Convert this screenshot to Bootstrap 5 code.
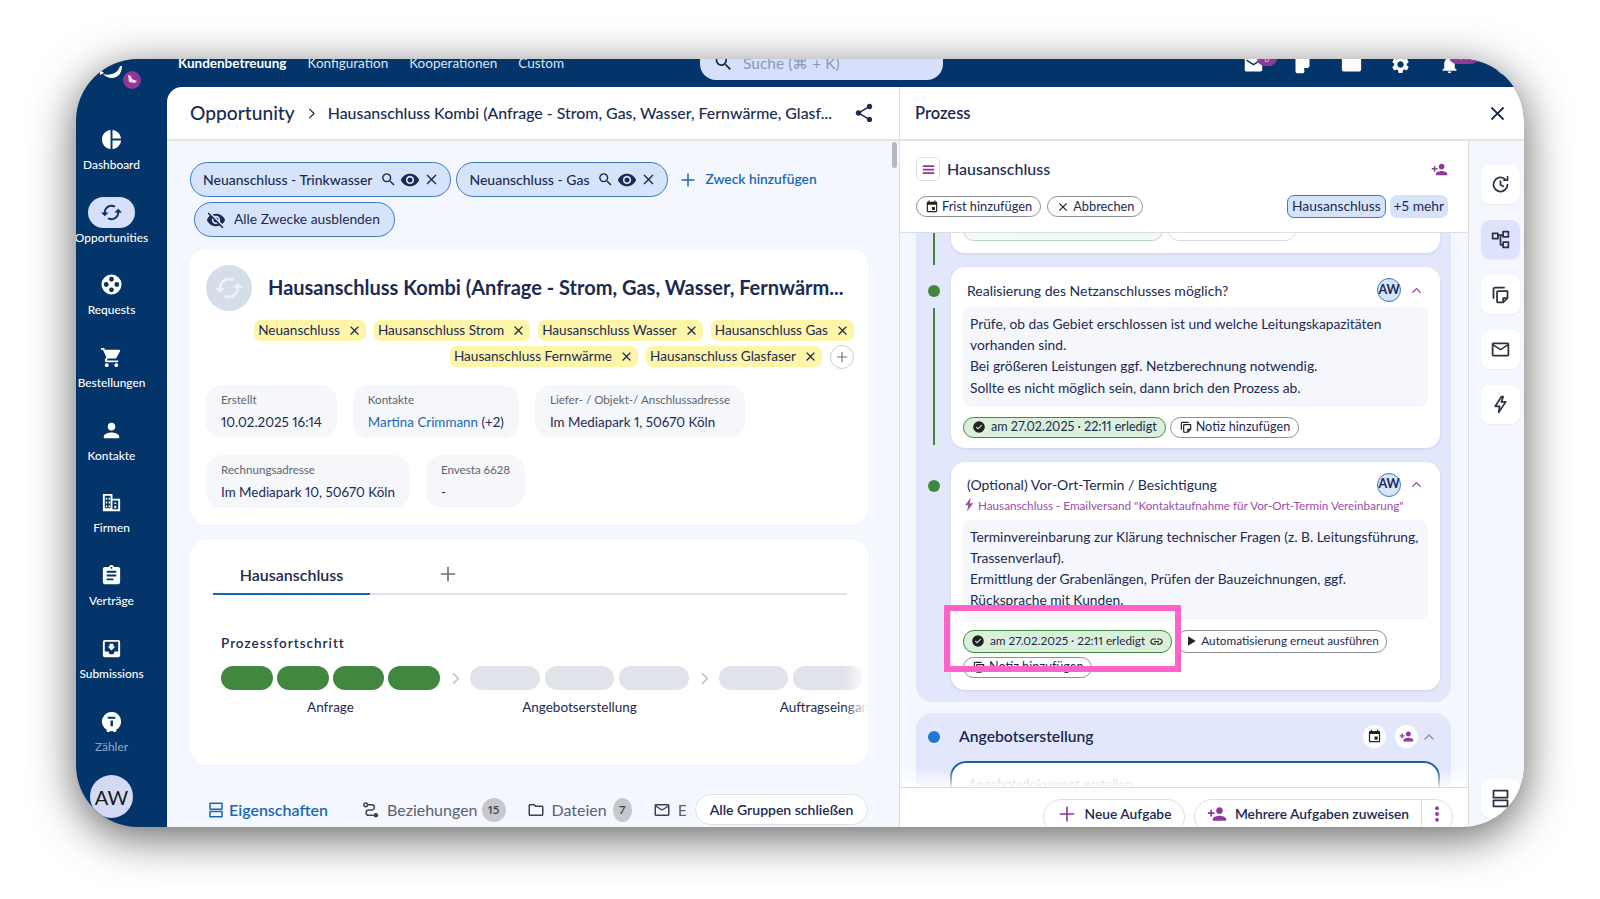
<!DOCTYPE html>
<html lang="de">

<head>
    <meta charset="UTF-8" />
    <meta name="viewport" content="width=device-width, initial-scale=1.0" />
    <title>Opportunity</title>
    <link href="https://cdn.jsdelivr.net/npm/bootstrap@5.3.2/dist/css/bootstrap.min.css" rel="stylesheet" />
    <style>
        html, body { height: 899px; overflow: hidden; }
        body { background: #fff; font-family: "Lato", "Liberation Sans", sans-serif; color: #1c2a52; font-size: 14px; font-variant-numeric: proportional-nums; }
        .ic { width: 1em; height: 1em; flex: none; fill: currentColor; display: block; }
        .ics { fill: none; stroke: currentColor; stroke-width: 2; stroke-linecap: round; stroke-linejoin: round; }

        .appwin { position: absolute; left: 76px; top: 59px; width: 1448px; height: 768px; border-radius: 62px; overflow: hidden; background: #03346a; box-shadow: 0 10px 46px rgba(0, 0, 0, .62); }

        /* sidebar */
        .side { width: 91px; flex: none; color: #fff; padding-right: 20px; }
        .logo-box { height: 65px; }
        .side-item { height: 72.7px; font-size: 11.9px; font-weight: 500; white-space: nowrap; }
        .side-ico { width: 47px; height: 31px; border-radius: 16px; font-size: 23px; }
        .side-item.active .side-ico { background: #d6e0fb; color: #03346a; }
        .side-lbl { line-height: 14px; margin-top: 3px; }
        .side-item.dim .side-lbl { color: #8ba3c4; }
        .side-av { width: 43px; height: 43px; border-radius: 50%; background: #d2daf6; color: #1a1a1a; font-size: 20px; margin-top: -3px; flex: none; }

        /* top bar */
        .topbar { height: 28px; flex: none; color: #fff; padding-left: 11px; }
        .topnav { font-size: 13.5px; margin-top: -4px; margin-right: 21px; line-height: 16px; color: #dbe4f3; }
        .topnav.on { font-weight: 700; color: #fff; }
        .searchbox { width: 243px; height: 41px; margin: -20px 0 0 115px; background: #d6e0fb; border-radius: 0 0 16px 16px; padding: 13px 0 0 13px; color: #8b98b6; font-size: 15.5px; }
        .searchbox .ic { color: #1c2a52; font-size: 21px; margin-right: 9px; }
        .topicons { margin-left: auto; gap: 28px; margin-top: -5px; font-size: 21px; padding-right: 8px; }
        .topbadge { position: absolute; top: -4px; left: 14px; height: 16px; min-width: 20px; border-radius: 8px; background: #8e3a96; font-size: 9px; line-height: 18px; text-align: center; color: #d9b8dd; }
        .topbadge.wide { min-width: 30px; left: 10px; top: -6px; }
        .topround { width: 20px; height: 20px; border-radius: 50%; border: 2px solid #fff; margin-left: 8px; margin-top: 1px; }

        .body-wrap { min-height: 0; background: #fff; border-radius: 15px 0 0 0; overflow: hidden; }

        /* header strip */
        .headline { height: 54px; flex: none; border-bottom: 2px solid #e2e4e8; }
        .head-left { width: 733px; flex: none; padding: 0 24px 0 23px; border-right: 1px solid #dcdee3; }
        .h-crumb { font-size: 19.2px; font-weight: 500; white-space: nowrap; }
        .h-sep { font-size: 15px; margin: 0 9px 0 9px; }
        .h-title { font-size: 15.9px; font-weight: 500; width: 510px; white-space: nowrap; overflow: hidden; }
        .h-share { font-size: 22px; margin-left: 21px; }
        .head-right { padding: 0 15px; font-size: 16.5px; font-weight: 600; }
        .head-right .ic { font-size: 23px; margin-left: auto; }

        /* left pane */
        .pane-left { width: 733px; flex: none; background: #f5f7ff; border-right: 1px solid #dcdee3; padding: 21px 31px 0 23px; }
        .scroll-thumb { position: absolute; right: 2px; top: 1px; width: 5px; height: 26px; border-radius: 3px; background: #b4b8c0; }
        .purpose { height: 35px; background: #d6e4fb; border: 1.5px solid #3a79bf; border-radius: 18px; padding: 0 10px 0 12px; font-size: 14px; font-weight: 500; }
        .purpose .ic { font-size: 17px; }
        .purpose .ic-b { font-size: 20px; margin: 0 3px; }
        .purpose.hide-all { margin-left: 4px; padding: 0 14px 0 11px; font-weight: 400; font-size: 13.8px; }
        .purpose.hide-all .ic { font-size: 20px; margin-right: 8px; }
        .add-purpose { color: #1b67b7; font-size: 13.8px; font-weight: 600; margin-left: 6px; }
        .add-purpose .ic { font-size: 18px; margin-right: 8px; }
        .box-white { background: #fff; border-radius: 16px; }
        .box-top { height: 275px; margin-top: 12px; padding: 16px 14px 0 16px; }
        .opp-av { width: 46px; height: 46px; border-radius: 50%; background: #d3deea; color: #eef3f8; font-size: 30px; flex: none; }
        .opp-title { font-size: 20px; font-weight: 700; margin-left: 16px; white-space: nowrap; margin-top: -2px; }
        .tagrow { margin-top: 9px; gap: 5px 8px; }
        .ytag { height: 21px; background: #fdf6a9; border-radius: 7px; padding: 0 4px; font-size: 13.6px; line-height: 21px; white-space: nowrap; }
        .ytag .ic { font-size: 15px; margin-left: 7px; }
        .addtag { width: 24px; height: 24px; border-radius: 50%; border: 1px solid #c9ccd3; color: #6d7280; font-size: 14px; margin: -2px 0; }
        .inforow { gap: 16px; margin-top: 18px; }
        .inforow.second { margin-top: 17px; }
        .infobox { height: 53px; background: #f5f7fb; border-radius: 16px; padding: 7px 15px 0; white-space: nowrap; }
        .infobox small { display: block; font-size: 11.6px; line-height: 15px; color: #5d6470; }
        .infobox div { font-size: 13.4px; line-height: 19px; margin-top: 6px; }
        .infobox a { color: #1b67b7; text-decoration: none; }
        .box-proc { height: 224px; margin-top: 16px; padding-top: 1px; }
        .tabline { margin: 16px 21px 0 23px; height: 38px; border-bottom: 2px solid #dfe2e8; }
        .tabon { width: 157px; height: 38px; border-bottom: 2px solid #1b67b7; font-size: 16px; font-weight: 600; text-align: center; line-height: 36px; }
        .tabplus { font-size: 20px; color: #6d7280; margin-left: 68px; margin-top: 7px; }
        .pf-title { font-size: 13.5px; font-weight: 600; letter-spacing: 1px; margin: 39px 0 0 31px; line-height: 18px; }
        .pf-wrap { margin: 14px 0 0 31px; overflow: hidden; }
        .pf-fade { position: absolute; right: 0; top: 0; bottom: 0; width: 24px; background: linear-gradient(to right, rgba(255, 255, 255, 0), #fff); }
        .pf-grp { flex: none; width: 219px; }
        .pf-grp.wide { width: 218px; }
        .seg { flex: 1 1 0; height: 24px; border-radius: 12px; background: #e0e3ea; }
        .seg.done { background: #42873f; }
        .pf-lbl { text-align: center; font-size: 13.5px; margin-top: 8px; line-height: 18px; white-space: nowrap; }
        .pf-arrow { flex: none; width: 30px; height: 24px; color: #b9bcc4; font-size: 17px; }
        .subtabs { height: 31px; margin-top: 30px; }
        .subtab-clip { width: 496px; padding-left: 17px; overflow: hidden; white-space: nowrap; font-size: 16px; color: #5a6070; }
        .subtab { flex: none; margin-right: 21px; }
        .subtab .ic { font-size: 18px; margin-right: 7px; color: #3c4250; }
        .subtab.on { color: #1b67b7; font-weight: 600; margin-right: 34px; }
        .subtab.on .ic { color: #1b67b7; margin-right: 4px; }
        .cnt { width: 24px; height: 24px; border-radius: 50%; background: #c5c8cf; color: #444; font-size: 12px; margin-left: 4px; font-weight: 600; }
        .cnt.sm { width: 19px; margin-left: 6px; }
        .closeall { height: 31px; width: 173px; margin-left: auto; background: #fff; border: 1px solid #dfe2e8; border-radius: 16px; font-size: 14px; font-weight: 600; padding: 0; line-height: 28px; color: #1c2a52; flex: none; }

        /* right pane */
        .pane-right { min-width: 0; }
        .proc-col { width: 569px; flex: none; border-right: 1px solid #dcdee3; }
        .proc-head { height: 92px; flex: none; border-bottom: 1px solid #dcdee3; padding: 16px 20px 0 16px; }
        .menu-sq { width: 24px; height: 24px; border: 1px solid #dcdee3; border-radius: 5px; color: #8e3a96; font-size: 17px; }
        .ph-title { font-size: 16px; font-weight: 500; margin-left: 7px; }
        .ph-add { margin-left: auto; font-size: 17px; color: #8e3a96; }
        .ph-row { margin-top: 14px; gap: 0; }
        .ochip { height: 21px; border: 1px solid #8b8f97; border-radius: 11px; padding: 0 8px; font-size: 12.8px; white-space: nowrap; background: #fff; }
        .ochip .ic { font-size: 14px; margin-right: 3px; color: #222; }
        .ochip.next-to { margin-left: 6px; }
        .task .ochip { font-size: 12.6px; }
        .task .ochip.tight { font-size: 11.8px; padding: 0 7px; }
        .ochip.green { background: #daf0da; border-color: #3d8b40; color: #1c2a52; padding: 0 8px; }
        .ochip.green .ic { font-size: 14px; margin-right: 5px; }
        .ochip.green .ic.tail { margin: 0 0 0 4px; font-size: 15px; }
        .bchip { height: 23px; background: #d6e4fb; border-radius: 7px; padding: 0 4px; font-size: 13.8px; white-space: nowrap; margin-left: 4px; }
        .bchip.bordered { border: 1.5px solid #3a79bf; margin-left: auto; }

        .proc-scroll { min-height: 0; background: #f5f7ff; overflow: hidden; padding: 0 17px 0 16px; }
        .stage-panel { background: #e3e7fb; border-radius: 16px; padding: 0 11px 12px 0; margin-top: -30px; }
        .step { padding-bottom: 14px; }
        .step.first { padding-bottom: 2px; }
        .step:last-child { padding-bottom: 0; }
        .gut { width: 35px; flex: none; }
        .gut-dot { width: 12px; height: 12px; border-radius: 50%; background: #42873f; margin-top: 18px; }
        .gut-line { width: 2px; flex: 1 1 0; background: #42873f; margin-top: 11px; margin-bottom: 3px; }
        .gut-line.up { flex: none; height: 32px; margin-top: 30px; margin-bottom: 0; }
        .task { background: #fff; border-radius: 14px; box-shadow: 0 1px 3px rgba(40, 50, 110, .12); padding: 11px 12px 10px; min-width: 0; }
        .task.tall { padding-bottom: 12px; }
        .task.old { height: 50px; padding: 17px 12px 0; overflow: hidden; margin-bottom: 12px; gap: 5px; }
        .faint { opacity: .35; }
        .faint.w1 { width: 200px; }
        .faint.w2 { width: 128px; }
        .task-head { height: 24px; margin-bottom: 5px; padding-left: 4px; font-size: 14px; }
        .av-sm { width: 24px; height: 24px; border-radius: 50%; background: #d6e4fb; border: 1.5px solid #3a79bf; font-size: 12.5px; font-weight: 700; margin-left: auto; }
        .chev { color: #8e3a96; font-size: 15px; margin: 0 4px 0 8px; }
        .task-auto { color: #a04bab; font-size: 11.7px; line-height: 16px; margin: -5px 0 7px -1px; white-space: nowrap; }
        .task-auto .ic { font-size: 15px; margin-right: 1px; }
        .task-txt { background: #f5f7fc; border-radius: 8px; padding: 6px 7px 9px; font-size: 13.8px; line-height: 21.2px; }
        .chips { margin-top: 10px; gap: 4px 4px; }
        .chips .taller { height: 23px; }
        .pinkmark { position: absolute; left: -7px; top: 143px; width: 237px; height: 67px; border: 6px solid #ff62c8; pointer-events: none; }
        .stage-next { margin-top: 11px; border-radius: 16px 16px 0 0; padding: 0 11px 0 0; height: 100px; background: #e3e7fb; }
        .next-head { height: 48px; }
        .next-dot { width: 12px; height: 12px; border-radius: 50%; background: #2176d6; }
        .next-title { font-size: 15.7px; font-weight: 600; }
        .round-w { width: 23px; height: 23px; border-radius: 50%; background: #fff; font-size: 15px; margin-left: 8.500px; color: #222; }
        .round-w.p { color: #8e3a96; }
        .next-chev { color: #8a8e98; font-size: 16px; margin: 0 3px 0 3.500px; }
        .next-task { margin-left: 34px; height: 60px; background: #fff; border: 2px solid #17609f; border-radius: 16px 16px 0 0; padding: 12px 16px; font-size: 13px; color: #aeb4c4; }
        .proc-fade { position: absolute; left: 0; right: 0; bottom: 0; height: 18px; background: linear-gradient(to bottom, rgba(255, 255, 255, 0), rgba(255, 255, 255, .9)); }
        .proc-foot { height: 40px; flex: none; border-top: 1px solid #dcdee3; padding: 11px 15px 0 0; overflow: hidden; gap: 9px; }
        .fbtn { height: 36px; background: #fff; border: 1px solid #dcdee3; border-radius: 18px; font-size: 13.8px; font-weight: 600; flex: none; padding: 0 0 6px; color: #1c2a52; }
        .fbtn .ic { color: #8e3a96; font-size: 20px; }
        .fbtn.one { width: 142px; }
        .fbtn.two { width: 259px; }
        .fsplit { border-left: 1px solid #dcdee3; width: 31px; height: 36px; margin-bottom: -6px; padding-bottom: 6px; color: #8e3a96; font-size: 20px; }

        .rail { background: #f5f7ff; padding: 24px 0 9px 12px; gap: 16px; }
        .railbtn { width: 39px; height: 39px; background: #fff; border-radius: 9px; font-size: 21px; color: #2a3340; box-shadow: 0 1px 2px rgba(0, 0, 0, .05); }
        .railbtn.on { background: #dce3fa; }
    </style>
</head>

<body>
    <!-- icon set -->
    <svg class="d-none" xmlns="http://www.w3.org/2000/svg">
        <symbol id="i-x" viewBox="0 0 24 24"><path d="M19 6.41 17.59 5 12 10.59 6.41 5 5 6.41 10.59 12 5 17.59 6.41 19 12 13.41 17.59 19 19 17.59 13.41 12z" /></symbol>
        <symbol id="i-search" viewBox="0 0 24 24"><path d="M15.5 14h-.79l-.28-.27A6.471 6.471 0 0 0 16 9.5 6.5 6.5 0 1 0 9.5 16c1.61 0 3.09-.59 4.23-1.57l.27.28v.79l5 4.99L20.49 19l-4.99-5zm-6 0C7.01 14 5 11.99 5 9.5S7.01 5 9.5 5 14 7.01 14 9.5 11.99 14 9.5 14z" /></symbol>
        <symbol id="i-eye" viewBox="0 0 24 24"><path d="M12 4.5C7 4.5 2.73 7.61 1 12c1.73 4.39 6 7.5 11 7.5s9.27-3.11 11-7.5c-1.73-4.39-6-7.5-11-7.5zM12 17c-2.76 0-5-2.24-5-5s2.24-5 5-5 5 2.24 5 5-2.24 5-5 5zm0-8c-1.66 0-3 1.34-3 3s1.34 3 3 3 3-1.34 3-3-1.34-3-3-3z" /></symbol>
        <symbol id="i-eyeoff" viewBox="0 0 24 24"><path d="M12 7c2.76 0 5 2.24 5 5 0 .65-.13 1.26-.36 1.83l2.92 2.92c1.51-1.26 2.7-2.89 3.43-4.75-1.73-4.39-6-7.5-11-7.5-1.4 0-2.74.25-3.98.7l2.16 2.16C10.74 7.13 11.35 7 12 7zM2 4.27l2.28 2.28.46.46A11.804 11.804 0 0 0 1 12c1.73 4.39 6 7.5 11 7.5 1.55 0 3.03-.3 4.38-.84l.42.42L19.73 22 21 20.73 3.27 3 2 4.27zM7.53 9.8l1.55 1.55c-.05.21-.08.43-.08.65 0 1.66 1.34 3 3 3 .22 0 .44-.03.65-.08l1.55 1.55c-.67.33-1.41.53-2.2.53-2.76 0-5-2.24-5-5 0-.79.2-1.53.53-2.2zm4.31-.78 3.15 3.15.02-.16c0-1.66-1.34-3-3-3l-.17.01z" /></symbol>
        <symbol id="i-sync" viewBox="0 0 24 24"><path d="M19 8l-4 4h3c0 3.31-2.69 6-6 6-1.01 0-1.97-.25-2.800-.7l-1.460 1.460C8.970 19.540 10.430 20 12 20c4.420 0 8-3.580 8-8h3l-4-4zM6 12c0-3.310 2.690-6 6-6 1.010 0 1.970.25 2.800.7l1.460-1.460C15.030 4.460 13.570 4 12 4c-4.420 0-8 3.580-8 8H1l4 4 4-4H6z" /></symbol>
        <symbol id="i-pie" viewBox="0 0 24 24"><path d="M11 2v20c-5.07-.5-9-4.79-9-10s3.93-9.5 9-10zm2.03 0v8.99H22c-.47-4.74-4.24-8.52-8.97-8.99zm0 11.01V22c4.74-.47 8.5-4.25 8.97-8.99h-8.97z" /></symbol>
        <symbol id="i-cart" viewBox="0 0 24 24"><path d="M7 18c-1.1 0-1.99.9-1.99 2S5.9 22 7 22s2-.9 2-2-.9-2-2-2zM1 2v2h2l3.6 7.59-1.35 2.45c-.16.28-.25.61-.25.96 0 1.1.9 2 2 2h12v-2H7.42c-.14 0-.25-.11-.25-.25l.03-.12.9-1.63h7.45c.75 0 1.41-.41 1.75-1.03l3.58-6.49c.08-.14.12-.31.12-.48 0-.55-.45-1-1-1H5.21l-.94-2H1zm16 16c-1.1 0-1.99.9-1.99 2s.89 2 1.99 2 2-.9 2-2-.9-2-2-2z" /></symbol>
        <symbol id="i-person" viewBox="0 0 24 24"><path d="M12 12c2.21 0 4-1.79 4-4s-1.79-4-4-4-4 1.79-4 4 1.79 4 4 4zm0 2c-2.67 0-8 1.34-8 4v2h16v-2c0-2.66-5.33-4-8-4z" /></symbol>
        <symbol id="i-padd" viewBox="0 0 24 24"><path d="M15 12c2.21 0 4-1.79 4-4s-1.79-4-4-4-4 1.79-4 4 1.79 4 4 4zm-9-2V7H4v3H1v2h3v3h2v-3h3v-2H6zm9 4c-2.67 0-8 1.34-8 4v2h16v-2c0-2.66-5.33-4-8-4z" /></symbol>
        <symbol id="i-clip" viewBox="0 0 24 24"><path d="M19 3h-4.18C14.4 1.84 13.3 1 12 1c-1.3 0-2.4.84-2.82 2H5c-1.1 0-2 .9-2 2v14c0 1.1.9 2 2 2h14c1.1 0 2-.9 2-2V5c0-1.1-.9-2-2-2zm-7 0c.55 0 1 .45 1 1s-.45 1-1 1-1-.45-1-1 .45-1 1-1zm2 14H7v-2h7v2zm3-4H7v-2h10v2zm0-4H7V7h10v2z" /></symbol>
        <symbol id="i-inbox" viewBox="0 0 24 24"><path fill-rule="evenodd" d="M5 3h14a2 2 0 0 1 2 2v14a2 2 0 0 1-2 2H5a2 2 0 0 1-2-2V5a2 2 0 0 1 2-2zm0 2v10h4a3 3 0 0 0 6 0h4V5H5zm5 2h4v3h2l-4 4-4-4h2V7z" /></symbol>
        <symbol id="i-build" viewBox="0 0 24 24"><path fill-rule="evenodd" d="M3 3h10v5h8v13H3V3zm2 2v13h6V5H5zm1 2h1.500v2H6zm3 0h1.500v2H9zm-3 4h1.500v2H6zm3 0h1.500v2H9zm-3 4h1.500v2H6zm3 0h1.500v2H9zm4-5v9h6v-9h-6zm2 2h2v1.500h-2zm0 3.500h2V18h-2z" /></symbol>
        <symbol id="i-help" viewBox="0 0 24 24"><path fill-rule="evenodd" d="M22 12a10 10 0 0 1-5 8.660V22a1 1 0 0 1-1 1h-1.500a1 1 0 0 1-1-1v-.05a10 10 0 0 1-3 0V22a1 1 0 0 1-1 1H8a1 1 0 0 1-1-1v-1.340A10 10 0 1 1 22 12zM8 7v2h8V7H8zm3 4v6h2.500v-6H11z" /></symbol>
        <symbol id="i-wheel" viewBox="0 0 24 24"><path fill-rule="evenodd" d="M12 1.500a10.500 10.500 0 1 1 0 21 10.500 10.500 0 0 1 0-21zM12 4a2.500 2.500 0 1 0 0 5 2.500 2.500 0 0 0 0-5zm0 11a2.500 2.500 0 1 0 0 5 2.500 2.500 0 0 0 0-5zM6.500 9.500a2.500 2.500 0 1 0 0 5 2.500 2.500 0 0 0 0-5zm11 0a2.500 2.500 0 1 0 0 5 2.500 2.500 0 0 0 0-5z" /></symbol>
        <symbol id="i-share" viewBox="0 0 24 24"><path d="M18 16.08c-.76 0-1.44.3-1.96.77L8.91 12.7c.05-.23.09-.46.09-.7s-.04-.47-.09-.7l7.05-4.11c.54.5 1.25.81 2.04.81 1.66 0 3-1.34 3-3s-1.34-3-3-3-3 1.34-3 3c0 .24.04.47.09.7L8.04 9.81C7.5 9.31 6.79 9 6 9c-1.66 0-3 1.34-3 3s1.34 3 3 3c.79 0 1.5-.31 2.04-.81l7.12 4.16c-.05.21-.08.43-.08.65 0 1.61 1.31 2.92 2.92 2.92 1.61 0 2.92-1.31 2.92-2.92s-1.31-2.92-2.92-2.92z" /></symbol>
        <symbol id="i-event" viewBox="0 0 24 24"><path d="M17 12h-5v5h5v-5zM16 1v2H8V1H6v2H5c-1.110 0-1.990.9-1.990 2L3 19c0 1.100.89 2 2 2h14c1.100 0 2-.9 2-2V5c0-1.100-.9-2-2-2h-1V1h-2zm3 18H5V8h14v11z" /></symbol>
        <symbol id="i-link" viewBox="0 0 24 24"><path d="M3.900 12c0-1.710 1.390-3.100 3.100-3.100h4V7H7c-2.760 0-5 2.240-5 5s2.240 5 5 5h4v-1.900H7c-1.710 0-3.100-1.390-3.100-3.100zM8 13h8v-2H8v2zm9-6h-4v1.900h4c1.710 0 3.100 1.390 3.100 3.100s-1.390 3.100-3.100 3.100h-4V17h4c2.760 0 5-2.240 5-5s-2.240-5-5-5z" /></symbol>
        <symbol id="i-mail" viewBox="0 0 24 24"><path d="M20 4H4c-1.100 0-1.990.9-1.990 2L2 18c0 1.100.9 2 2 2h16c1.100 0 2-.9 2-2V6c0-1.100-.9-2-2-2zm0 14H4V8l8 5 8-5v10zm-8-7L4 6h16l-8 5z" /></symbol>
        <symbol id="i-mailf" viewBox="0 0 24 24"><path d="M20 4H4c-1.100 0-1.990.9-1.990 2L2 18c0 1.100.9 2 2 2h16c1.100 0 2-.9 2-2V6c0-1.100-.9-2-2-2zm0 4-8 5-8-5V6l8 5 8-5v2z" /></symbol>
        <symbol id="i-folder" viewBox="0 0 24 24"><path d="M9.170 6l2 2H20v10H4V6h5.170M10 4H4c-1.100 0-1.990.9-1.990 2L2 18c0 1.100.9 2 2 2h16c1.100 0 2-.9 2-2V8c0-1.100-.9-2-2-2h-8l-2-2z" /></symbol>
        <symbol id="i-gear" viewBox="0 0 24 24"><path d="M19.140 12.940c.04-.3.06-.61.06-.94 0-.32-.02-.64-.07-.94l2.030-1.580a.49.49 0 0 0 .12-.61l-1.920-3.320a.488.488 0 0 0-.59-.22l-2.390.96c-.5-.38-1.030-.7-1.620-.94l-.36-2.540a.484.484 0 0 0-.48-.41h-3.840c-.24 0-.43.17-.47.41l-.36 2.540c-.59.24-1.130.57-1.620.94l-2.390-.96c-.22-.08-.47 0-.59.22L2.740 8.870c-.12.21-.08.47.12.61l2.030 1.580c-.05.3-.09.63-.09.94s.02.64.07.94l-2.030 1.580a.49.49 0 0 0-.12.61l1.920 3.320c.12.22.37.29.59.22l2.390-.96c.5.38 1.030.7 1.620.94l.36 2.540c.05.24.24.41.48.41h3.840c.24 0 .44-.17.47-.41l.36-2.540c.59-.24 1.130-.56 1.620-.94l2.390.96c.22.08.47 0 .59-.22l1.920-3.320c.12-.22.07-.47-.12-.61l-2.010-1.580zM12 15.600c-1.980 0-3.600-1.620-3.600-3.600s1.620-3.600 3.600-3.600 3.600 1.620 3.600 3.600-1.620 3.600-3.600 3.600z" /></symbol>
        <symbol id="i-bell" viewBox="0 0 24 24"><path d="M12 22c1.100 0 2-.9 2-2h-4c0 1.100.89 2 2 2zm6-6v-5c0-3.070-1.640-5.640-4.500-6.320V4c0-.83-.67-1.500-1.500-1.500s-1.500.67-1.500 1.500v.68C7.630 5.360 6 7.920 6 11v5l-2 2v1h16v-1l-2-2z" /></symbol>
        <symbol id="i-bolt" viewBox="0 0 24 24"><path d="M14 1 5 13h5l-2 10 10-13h-5.500z" /></symbol>
        <symbol id="i-boltl" viewBox="0 0 24 24"><path class="ics" d="M13 3 6 14h5l-1 7 8-12h-5l2-6z" /></symbol>
        <symbol id="i-check" viewBox="0 0 24 24"><path fill-rule="evenodd" d="M12 2a10 10 0 1 1 0 20 10 10 0 0 1 0-20zm-1.700 14.400 7-7L15.900 8l-5.600 5.600-2.200-2.200-1.400 1.400 3.600 3.600z" /></symbol>
        <symbol id="i-copy" viewBox="0 0 24 24"><path class="ics" d="M4 16V6a2 2 0 0 1 2-2h10M9 8h11v8l-5 5H9a1 1 0 0 1-1-1V9a1 1 0 0 1 1-1zM20 16h-5v5" /></symbol>
        <symbol id="i-hist" viewBox="0 0 24 24"><path class="ics" d="M20 12a8 8 0 1 1-3.200-6.400M20 3v4h-4M12 8v4.500l3 1.500" /></symbol>
        <symbol id="i-tree" viewBox="0 0 24 24"><path class="ics" d="M3 5h6v6H3zM15 3h6v6h-6zM15 15h6v6h-6zM9 7h6M12 7v11h3" /></symbol>
        <symbol id="i-agenda" viewBox="0 0 24 24"><path class="ics" d="M4 3h16v8H4zM4 14h16v7H4z" /></symbol>
        <symbol id="i-rel" viewBox="0 0 24 24"><circle class="ics" cx="5" cy="5" r="2.500" /><path class="ics" d="M8 5h5a3.500 3.500 0 0 1 0 7H9a3.500 3.500 0 0 0 0 7h6" /><circle cx="18.500" cy="19" r="3" /></symbol>
        <symbol id="i-up" viewBox="0 0 24 24"><path class="ics" d="m6 15 6-6 6 6" /></symbol>
        <symbol id="i-right" viewBox="0 0 24 24"><path class="ics" d="m9 5 7 7-7 7" /></symbol>
        <symbol id="i-plus" viewBox="0 0 24 24"><path class="ics" d="M12 4v16M4 12h16" /></symbol>
        <symbol id="i-play" viewBox="0 0 24 24"><path d="M7 4v16l13-8z" /></symbol>
        <symbol id="i-menu" viewBox="0 0 24 24"><path d="M4 6h16v2.500H4zM4 11h16v2.500H4zM4 16h16v2.500H4z" /></symbol>
        <symbol id="i-more" viewBox="0 0 24 24"><circle cx="12" cy="5" r="2.300" /><circle cx="12" cy="12" r="2.300" /><circle cx="12" cy="19" r="2.300" /></symbol>
        <symbol id="i-note" viewBox="0 0 24 24"><path fill-rule="evenodd" d="M6 2h12a2 2 0 0 1 2 2v10l-7 8H6a2 2 0 0 1-2-2V4a2 2 0 0 1 2-2zm8 14v4.500l4.500-4.500H14z" /></symbol>
        <symbol id="i-sq" viewBox="0 0 24 24"><rect x="1" y="0" width="22" height="20" rx="2" /></symbol>
    </svg>

    <div class="appwin d-flex">
        <!-- sidebar -->
        <div class="side d-flex flex-column align-items-center">
            <div class="logo-box w-100">
                <svg width="70" height="34" viewBox="0 0 70 34">
                    <path d="M46 7c0 7-4 12-10 12-4 0-7-2-9-4 3 1 6 1 9 0 4-1 7-4 8-8z" fill="#fff" />
                    <path d="M24 11l4 3-4 2z" fill="#fff" />
                    <circle cx="56" cy="21" r="9" fill="#8e3a96" />
                    <path d="M52 16l3 1 1 3 5 2-2 2-6-1z" fill="#f0d8f0" />
                </svg>
            </div>
            <div class="side-item d-flex flex-column align-items-center"><div class="side-ico d-flex align-items-center justify-content-center"><svg class="ic"><use href="#i-pie" /></svg></div><div class="side-lbl">Dashboard</div></div>
            <div class="side-item active d-flex flex-column align-items-center"><div class="side-ico d-flex align-items-center justify-content-center"><svg class="ic"><use href="#i-sync" /></svg></div><div class="side-lbl">Opportunities</div></div>
            <div class="side-item d-flex flex-column align-items-center"><div class="side-ico d-flex align-items-center justify-content-center"><svg class="ic"><use href="#i-wheel" /></svg></div><div class="side-lbl">Requests</div></div>
            <div class="side-item d-flex flex-column align-items-center"><div class="side-ico d-flex align-items-center justify-content-center"><svg class="ic"><use href="#i-cart" /></svg></div><div class="side-lbl">Bestellungen</div></div>
            <div class="side-item d-flex flex-column align-items-center"><div class="side-ico d-flex align-items-center justify-content-center"><svg class="ic"><use href="#i-person" /></svg></div><div class="side-lbl">Kontakte</div></div>
            <div class="side-item d-flex flex-column align-items-center"><div class="side-ico d-flex align-items-center justify-content-center"><svg class="ic"><use href="#i-build" /></svg></div><div class="side-lbl">Firmen</div></div>
            <div class="side-item d-flex flex-column align-items-center"><div class="side-ico d-flex align-items-center justify-content-center"><svg class="ic"><use href="#i-clip" /></svg></div><div class="side-lbl">Verträge</div></div>
            <div class="side-item d-flex flex-column align-items-center"><div class="side-ico d-flex align-items-center justify-content-center"><svg class="ic"><use href="#i-inbox" /></svg></div><div class="side-lbl">Submissions</div></div>
            <div class="side-item dim d-flex flex-column align-items-center"><div class="side-ico d-flex align-items-center justify-content-center"><svg class="ic"><use href="#i-help" /></svg></div><div class="side-lbl">Zähler</div></div>
            <div class="side-av d-flex align-items-center justify-content-center">AW</div>
        </div>

        <div class="flex-grow-1 d-flex flex-column" style="min-width:0">
            <!-- top bar -->
            <div class="topbar d-flex">
                <div class="topnav on">Kundenbetreuung</div>
                <div class="topnav">Konfiguration</div>
                <div class="topnav">Kooperationen</div>
                <div class="topnav">Custom</div>
                <div class="searchbox d-flex align-items-start"><svg class="ic"><use href="#i-search" /></svg><span>Suche (⌘ + K)</span></div>
                <div class="topicons d-flex">
                    <div class="position-relative"><svg class="ic"><use href="#i-mailf" /></svg><span class="topbadge">8</span></div>
                    <svg class="ic"><use href="#i-note" /></svg>
                    <svg class="ic"><use href="#i-sq" /></svg>
                    <svg class="ic"><use href="#i-gear" /></svg>
                    <div class="position-relative"><svg class="ic"><use href="#i-bell" /></svg><span class="topbadge wide">99</span></div>
                    <div class="topround"></div>
                </div>
            </div>

            <div class="body-wrap flex-grow-1 d-flex flex-column">
                <div class="headline d-flex">
                    <div class="head-left d-flex align-items-center">
                        <span class="h-crumb">Opportunity</span>
                        <svg class="ic h-sep"><use href="#i-right" /></svg>
                        <span class="h-title">Hausanschluss Kombi (Anfrage - Strom, Gas, Wasser, Fernwärme, Glasf...</span>
                        <svg class="ic h-share"><use href="#i-share" /></svg>
                    </div>
                    <div class="head-right flex-grow-1 d-flex align-items-center">Prozess<svg class="ic"><use href="#i-x" /></svg></div>
                </div>

                <div class="flex-grow-1 d-flex" style="min-height:0">
                    <!-- left pane -->
                    <div class="pane-left position-relative">
                        <div class="scroll-thumb"></div>
                        <div class="d-flex flex-wrap align-items-center" style="row-gap:5px;column-gap:5px">
                            <div class="purpose d-inline-flex align-items-center">Neuanschluss - Trinkwasser<svg class="ic ms-2"><use href="#i-search" /></svg><svg class="ic ic-b"><use href="#i-eye" /></svg><svg class="ic"><use href="#i-x" /></svg></div>
                            <div class="purpose d-inline-flex align-items-center">Neuanschluss - Gas<svg class="ic ms-2"><use href="#i-search" /></svg><svg class="ic ic-b"><use href="#i-eye" /></svg><svg class="ic"><use href="#i-x" /></svg></div>
                            <div class="add-purpose d-inline-flex align-items-center"><svg class="ic"><use href="#i-plus" /></svg>Zweck hinzufügen</div>
                            <div class="purpose hide-all d-inline-flex align-items-center"><svg class="ic"><use href="#i-eyeoff" /></svg>Alle Zwecke ausblenden</div>
                        </div>

                        <div class="box-white box-top">
                            <div class="d-flex align-items-center">
                                <div class="opp-av d-flex align-items-center justify-content-center"><svg class="ic"><use href="#i-sync" /></svg></div>
                                <div class="opp-title">Hausanschluss Kombi (Anfrage - Strom, Gas, Wasser, Fernwärm...</div>
                            </div>
                            <div class="tagrow d-flex flex-wrap justify-content-end align-items-center">
                                <span class="ytag d-inline-flex align-items-center">Neuanschluss<svg class="ic"><use href="#i-x" /></svg></span>
                                <span class="ytag d-inline-flex align-items-center">Hausanschluss Strom<svg class="ic"><use href="#i-x" /></svg></span>
                                <span class="ytag d-inline-flex align-items-center">Hausanschluss Wasser<svg class="ic"><use href="#i-x" /></svg></span>
                                <span class="ytag d-inline-flex align-items-center">Hausanschluss Gas<svg class="ic"><use href="#i-x" /></svg></span>
                                <span class="ytag d-inline-flex align-items-center">Hausanschluss Fernwärme<svg class="ic"><use href="#i-x" /></svg></span>
                                <span class="ytag d-inline-flex align-items-center">Hausanschluss Glasfaser<svg class="ic"><use href="#i-x" /></svg></span>
                                <span class="addtag d-inline-flex align-items-center justify-content-center"><svg class="ic"><use href="#i-plus" /></svg></span>
                            </div>
                            <div class="inforow d-flex">
                                <div class="infobox"><small>Erstellt</small><div>10.02.2025 16:14</div></div>
                                <div class="infobox"><small>Kontakte</small><div><a href="#">Martina Crimmann</a> (+2)</div></div>
                                <div class="infobox"><small>Liefer- / Objekt-/ Anschlussadresse</small><div>Im Mediapark 1, 50670 Köln</div></div>
                            </div>
                            <div class="inforow second d-flex">
                                <div class="infobox"><small>Rechnungsadresse</small><div>Im Mediapark 10, 50670 Köln</div></div>
                                <div class="infobox"><small>Envesta 6628</small><div>-</div></div>
                            </div>
                        </div>

                        <div class="box-white box-proc">
                            <div class="tabline d-flex">
                                <div class="tabon">Hausanschluss</div>
                                <svg class="ic tabplus"><use href="#i-plus" /></svg>
                            </div>
                            <div class="pf-title">Prozessfortschritt</div>
                            <div class="pf-wrap d-flex position-relative">
                                <div class="pf-grp">
                                    <div class="d-flex" style="gap:4px"><div class="seg done"></div><div class="seg done"></div><div class="seg done"></div><div class="seg done"></div></div>
                                    <div class="pf-lbl">Anfrage</div>
                                </div>
                                <div class="pf-arrow d-flex align-items-center justify-content-center"><svg class="ic"><use href="#i-right" /></svg></div>
                                <div class="pf-grp">
                                    <div class="d-flex" style="gap:5px"><div class="seg"></div><div class="seg"></div><div class="seg"></div></div>
                                    <div class="pf-lbl">Angebotserstellung</div>
                                </div>
                                <div class="pf-arrow d-flex align-items-center justify-content-center"><svg class="ic"><use href="#i-right" /></svg></div>
                                <div class="pf-grp wide">
                                    <div class="d-flex" style="gap:5px"><div class="seg"></div><div class="seg"></div><div class="seg"></div></div>
                                    <div class="pf-lbl">Auftragseingang</div>
                                </div>
                                <div class="pf-fade"></div>
                            </div>
                        </div>

                        <div class="subtabs d-flex align-items-center">
                            <div class="subtab-clip d-flex align-items-center">
                                <div class="subtab on d-flex align-items-center"><svg class="ic"><use href="#i-agenda" /></svg>Eigenschaften</div>
                                <div class="subtab d-flex align-items-center"><svg class="ic"><use href="#i-rel" /></svg>Beziehungen<span class="cnt d-inline-flex align-items-center justify-content-center">15</span></div>
                                <div class="subtab d-flex align-items-center"><svg class="ic"><use href="#i-folder" /></svg>Dateien<span class="cnt sm d-inline-flex align-items-center justify-content-center">7</span></div>
                                <div class="subtab d-flex align-items-center"><svg class="ic"><use href="#i-mail" /></svg>E</div>
                            </div>
                            <button class="btn closeall" type="button">Alle Gruppen schließen</button>
                        </div>
                    </div>

                    <!-- right pane -->
                    <div class="pane-right flex-grow-1 d-flex">
                        <div class="proc-col d-flex flex-column">
                            <div class="proc-head">
                                <div class="d-flex align-items-center">
                                    <div class="menu-sq d-flex align-items-center justify-content-center"><svg class="ic"><use href="#i-menu" /></svg></div>
                                    <div class="ph-title">Hausanschluss</div>
                                    <svg class="ic ph-add"><use href="#i-padd" /></svg>
                                </div>
                                <div class="ph-row d-flex align-items-center">
                                    <span class="ochip d-inline-flex align-items-center"><svg class="ic"><use href="#i-event" /></svg>Frist hinzufügen</span>
                                    <span class="ochip next-to d-inline-flex align-items-center"><svg class="ic"><use href="#i-x" /></svg>Abbrechen</span>
                                    <span class="bchip bordered d-inline-flex align-items-center">Hausanschluss</span>
                                    <span class="bchip d-inline-flex align-items-center">+5 mehr</span>
                                </div>
                            </div>

                            <div class="proc-scroll flex-grow-1 position-relative">
                                <div class="stage-panel">
                                    <div class="d-flex step first">
                                        <div class="gut d-flex flex-column align-items-center"><div class="gut-line up"></div></div>
                                        <div class="task old flex-grow-1 d-flex">
                                            <span class="ochip green faint w1 d-inline-flex"></span>
                                            <span class="ochip faint w2 d-inline-flex"></span>
                                        </div>
                                    </div>

                                    <div class="d-flex step">
                                        <div class="gut d-flex flex-column align-items-center"><div class="gut-dot"></div><div class="gut-line"></div></div>
                                        <div class="task flex-grow-1">
                                            <div class="task-head d-flex align-items-center">Realisierung des Netzanschlusses möglich?<span class="av-sm d-inline-flex align-items-center justify-content-center">AW</span><svg class="ic chev"><use href="#i-up" /></svg></div>
                                            <div class="task-txt">Prüfe, ob das Gebiet erschlossen ist und welche Leitungskapazitäten vorhanden sind.<br />Bei größeren Leistungen ggf. Netzberechnung notwendig.<br />Sollte es nicht möglich sein, dann brich den Prozess ab.</div>
                                            <div class="chips d-flex flex-wrap">
                                                <span class="ochip green d-inline-flex align-items-center"><svg class="ic"><use href="#i-check" /></svg>am 27.02.2025 · 22:11 erledigt</span>
                                                <span class="ochip d-inline-flex align-items-center"><svg class="ic"><use href="#i-copy" /></svg>Notiz hinzufügen</span>
                                            </div>
                                        </div>
                                    </div>

                                    <div class="d-flex step">
                                        <div class="gut d-flex flex-column align-items-center"><div class="gut-dot"></div></div>
                                        <div class="task tall flex-grow-1 position-relative">
                                            <div class="task-head d-flex align-items-center">(Optional) Vor-Ort-Termin / Besichtigung<span class="av-sm d-inline-flex align-items-center justify-content-center">AW</span><svg class="ic chev"><use href="#i-up" /></svg></div>
                                            <div class="task-auto d-flex align-items-center"><svg class="ic"><use href="#i-bolt" /></svg>Hausanschluss - Emailversand "Kontaktaufnahme für Vor-Ort-Termin Vereinbarung"</div>
                                            <div class="task-txt">Terminvereinbarung zur Klärung technischer Fragen (z. B. Leitungsführung, Trassenverlauf).<br />Ermittlung der Grabenlängen, Prüfen der Bauzeichnungen, ggf. Rücksprache mit Kunden.</div>
                                            <div class="chips d-flex flex-wrap">
                                                <span class="ochip green tight taller d-inline-flex align-items-center"><svg class="ic"><use href="#i-check" /></svg>am 27.02.2025 · 22:11 erledigt<svg class="ic tail"><use href="#i-link" /></svg></span>
                                                <span class="ochip tight taller d-inline-flex align-items-center"><svg class="ic"><use href="#i-play" /></svg>Automatisierung erneut ausführen</span>
                                                <span class="ochip d-inline-flex align-items-center"><svg class="ic"><use href="#i-copy" /></svg>Notiz hinzufügen</span>
                                            </div>
                                            <div class="pinkmark"></div>
                                        </div>
                                    </div>
                                </div>

                                <div class="stage-next">
                                    <div class="next-head d-flex align-items-center">
                                        <div class="gut d-flex justify-content-center"><div class="next-dot"></div></div>
                                        <div class="next-title ms-2">Angebotserstellung</div>
                                        <span class="round-w ms-auto d-inline-flex align-items-center justify-content-center"><svg class="ic"><use href="#i-event" /></svg></span>
                                        <span class="round-w p d-inline-flex align-items-center justify-content-center"><svg class="ic"><use href="#i-padd" /></svg></span>
                                        <svg class="ic next-chev"><use href="#i-up" /></svg>
                                    </div>
                                    <div class="next-task">Angebotsdokument erstellen</div>
                                </div>
                                <div class="proc-fade"></div>
                            </div>

                            <div class="proc-foot d-flex justify-content-end">
                                <button class="btn fbtn one d-inline-flex align-items-center justify-content-center gap-2" type="button"><svg class="ic"><use href="#i-plus" /></svg>Neue Aufgabe</button>
                                <button class="btn fbtn two d-inline-flex align-items-center" type="button"><span class="flex-grow-1 d-inline-flex align-items-center justify-content-center gap-2"><svg class="ic"><use href="#i-padd" /></svg>Mehrere Aufgaben zuweisen</span><span class="fsplit d-inline-flex align-items-center justify-content-center"><svg class="ic"><use href="#i-more" /></svg></span></button>
                            </div>
                        </div>

                        <div class="rail flex-grow-1 d-flex flex-column">
                            <div class="railbtn d-flex align-items-center justify-content-center"><svg class="ic"><use href="#i-hist" /></svg></div>
                            <div class="railbtn on d-flex align-items-center justify-content-center"><svg class="ic"><use href="#i-tree" /></svg></div>
                            <div class="railbtn d-flex align-items-center justify-content-center"><svg class="ic"><use href="#i-copy" /></svg></div>
                            <div class="railbtn d-flex align-items-center justify-content-center"><svg class="ic"><use href="#i-mail" /></svg></div>
                            <div class="railbtn d-flex align-items-center justify-content-center"><svg class="ic"><use href="#i-boltl" /></svg></div>
                            <div class="railbtn mt-auto d-flex align-items-center justify-content-center"><svg class="ic"><use href="#i-agenda" /></svg></div>
                        </div>
                    </div>
                </div>
            </div>
        </div>
    </div>

    <script src="https://cdn.jsdelivr.net/npm/bootstrap@5.3.2/dist/js/bootstrap.bundle.min.js"></script>
</body>

</html>
